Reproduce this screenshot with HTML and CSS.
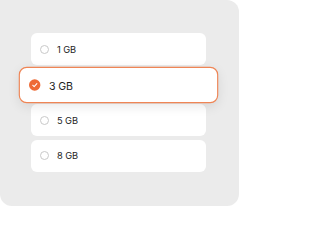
FILE: index.html
```html
<!DOCTYPE html>
<html>
<head>
<meta charset="utf-8">
<link rel="stylesheet" href="styles.css">
</head>
<body>
<div class="card">
  <div class="list">
    <div class="row"><span class="radio"></span><span class="label">1 GB</span></div>
    <div class="row selected"><span class="radio checked"><svg viewBox="0 0 10 10" width="10" height="10"><path d="M3.2 5.2 L4.5 6.4 L6.9 3.8" fill="none" stroke="#fff" stroke-width="0.9" stroke-linecap="round" stroke-linejoin="round"/></svg></span><span class="label">3 GB</span></div>
    <div class="row"><span class="radio"></span><span class="label">5 GB</span></div>
    <div class="row"><span class="radio"></span><span class="label">8 GB</span></div>
  </div>
</div>
</body>
</html>
```
FILE: styles.css
```css
html, body {
  margin: 0;
  padding: 0;
  background: #ffffff;
}
.card {
  width: 239px;
  height: 206px;
  box-sizing: border-box;
  background: #ebebeb;
  border-radius: 0 12px 12px 12px;
  padding-top: 33px;
  padding-left: 31px;
  font-family: "Inter", "Liberation Sans", sans-serif;
}
.list {
  width: 175px;
  display: flex;
  flex-direction: column;
  gap: 3.5px;
}
.row {
  height: 32px;
  box-sizing: border-box;
  background: #ffffff;
  border-radius: 6px;
  display: flex;
  align-items: center;
  padding-left: 8.5px;
  gap: 8.5px;
}
.radio {
  width: 9px;
  height: 9px;
  box-sizing: border-box;
  border: 1px solid #c9c9c9;
  border-radius: 50%;
  flex: none;
  display: flex;
  align-items: center;
  justify-content: center;
}
.label {
  font-size: 9.3px;
  color: #252525;
  letter-spacing: -0.1px;
}
.selected {
  position: relative;
  z-index: 2;
  transform: scale(1.14);
  border: 1px solid #ef8555;
  border-radius: 7px;
  box-shadow: 0 3px 10px rgba(0, 0, 0, 0.09);
  padding-left: 7.5px;
}
.radio.checked {
  width: 10px;
  height: 10px;
  border: none;
  background: #ee6a35;
}
.radio.checked svg {
  width: 10px;
  height: 10px;
}
.selected .label {
  margin-left: -0.5px;
  color: #1e1e1e;
}
```
